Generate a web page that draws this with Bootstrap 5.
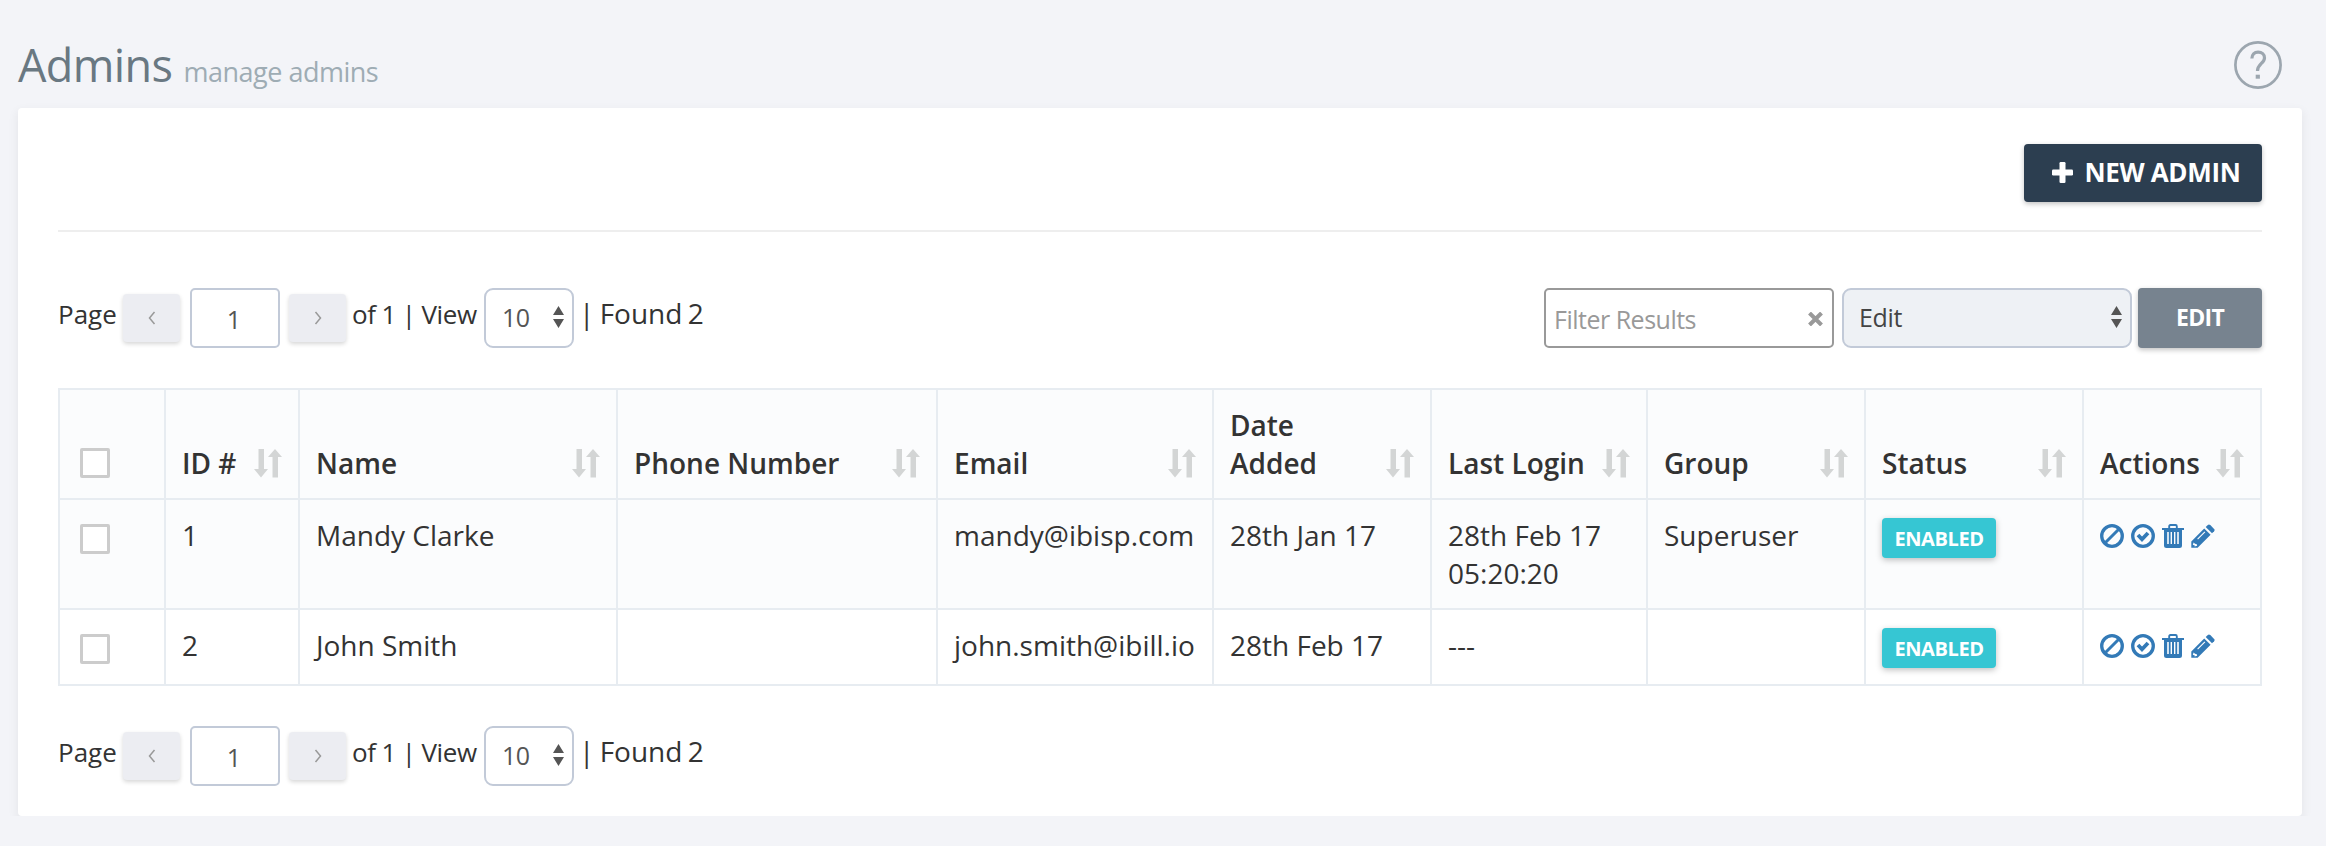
<!DOCTYPE html>
<html lang="en">
<head>
<meta charset="utf-8">
<title>Admins</title>
<link rel="stylesheet" href="https://cdn.jsdelivr.net/npm/bootstrap@5.3.0/dist/css/bootstrap.min.css">
<style>
body{background:#f3f4f8;font-family:"Open Sans",sans-serif;font-size:28px;line-height:38px;color:#333}
.page-head{height:108px;padding:0 44px 0 18px}
.page-title{font-size:45px;line-height:60px;color:#697882;padding-top:35px;font-weight:400;letter-spacing:-.6px}
.page-title small{font-size:27px;color:#9eacb4;font-weight:400;letter-spacing:-.5px}
.help{width:48px;height:48px;margin-top:41px}
.panel{margin:0 24px 0 18px;height:708px;padding:36px 40px 0;border-radius:4px;background:#fff;box-shadow:0 4px 10px 2px rgba(1,1,1,.05)}
.panel .btn{border:0;border-radius:4px;font-weight:700;box-shadow:0 2px 5px rgba(0,0,0,.24);padding:0;color:#fff;line-height:38px}
.panel .btn-new{width:238px;height:58px;background:#2c3e50;font-size:26px;letter-spacing:-.35px;padding-bottom:2px}
.panel .btn-new svg{margin:0 12px 0 6px}
.panel .btn-edit{width:124px;height:60px;background:#77838f;font-size:23px;letter-spacing:-.7px;margin-left:6px;padding-bottom:2px}
.rule{height:2px;background:#eee;margin-top:28px}
.tools{margin-top:56px;height:60px}
.pager{height:60px;font-size:26px}
.pager span{margin-top:7px;height:38px;white-space:nowrap}
.pager .lbl-page{width:65px}
.pager .lbl-of{margin-left:6px;width:132px;letter-spacing:-.4px;word-spacing:-.5px}
.pager .lbl-found{font-size:28px;margin-left:5px;margin-top:6px;word-spacing:-2px}
.panel .pg{width:57px;height:48px;margin-top:6px;background:#ecedf2;box-shadow:0 2px 4px rgba(0,0,0,.16)}
.box{border:2px solid #c2cad8;border-radius:5px;background:#fff;color:#555;height:60px;font-size:25px}
.pg-in{width:90px;margin:0 9px 0 10px;padding:2px 2px 0 0}
.sel{border-radius:9px}
.sel-n{width:90px;padding:0 8px 2px 16px;letter-spacing:-.5px}
.filter{width:290px;border-color:#999;color:#999;padding:2px 9px 0 8px;letter-spacing:-.5px}
.sel-edit{width:290px;background:#eef1f5;color:#444;margin-left:8px;padding:0 8px 2px 15px;letter-spacing:-.3px}
.grid{table-layout:fixed;width:2204px;margin:40px 0 0;border-collapse:collapse;color:#333}
.grid th,.grid td{border:2px solid #e7ecf1;padding:16px 14px 16px 16px;font-weight:400;vertical-align:top;background:#fff}
.grid th{font-weight:600;vertical-align:bottom;padding-right:16px}
.grid th,.grid .odd td{background:#fbfcfd}
.grid tbody tr{height:76px}
.cb{width:30px;height:30px;border:3px solid #ccc;border-radius:2px;background:#fff;margin:8px 0 0 4px}
th .cb{margin:0 0 4px 4px}
.tag{width:114px;height:40px;line-height:41px;background:#36c6d3;color:#fff;border-radius:4px;font-size:20px;font-weight:700;letter-spacing:-.4px;text-align:center;box-shadow:0 2px 6px rgba(0,0,0,.25);margin:2px 0 0}
.acts{color:#337ab7;padding:8px 0 0;gap:7px}
.foot{margin-top:40px}
</style>
<script src="https://cdn.jsdelivr.net/npm/bootstrap@5.3.0/dist/js/bootstrap.bundle.min.js"></script>
</head>
<body>
<svg width="0" height="0" class="d-none">
<symbol id="sort" viewBox="0 0 28 30"><path d="M4.500 1h5.500v20h4l-7 8.500L0 21h4.500zM18.500 29.500V9H14l7-8 7 8h-4v20.500z"/></symbol>
<symbol id="left" viewBox="0 0 8 14"><path d="M6.500 1L1.500 7l5 6" fill="none" stroke="#999" stroke-width="1.500"/></symbol>
<symbol id="right" viewBox="0 0 8 14"><path d="M1.500 1l5 6-5 6" fill="none" stroke="#999" stroke-width="1.500"/></symbol>
<symbol id="updown" viewBox="0 0 11 22"><path d="M5.500 0L11 9H0zM0 13h11l-5.500 9z"/></symbol>
<symbol id="ban" viewBox="0 0 24 24"><circle cx="12" cy="12" r="10.300" fill="none" stroke="currentColor" stroke-width="3.300"/><path d="M5 19L19 5" stroke="currentColor" stroke-width="3"/></symbol>
<symbol id="ok" viewBox="0 0 24 24"><circle cx="12" cy="12" r="10.300" fill="none" stroke="currentColor" stroke-width="3.300"/><path d="M7 11l4 4.200L17 9" fill="none" stroke="currentColor" stroke-width="3.800"/></symbol>
<symbol id="trash" viewBox="0 0 22 24"><path d="M7.200 4.500V2.200Q7.200 1 8.400 1h5.200q1.200 0 1.200 1.200v2.300" fill="none" stroke="currentColor" stroke-width="1.900"/><path fill-rule="evenodd" d="M0 4h22v2h-2v15.500q0 2.500-2.500 2.500h-13Q2 24 2 21.500V6H0zM5.200 8v12h1.600V8zM8.600 8v12h1.400V8zM12 8v12h1.400V8zM15.200 8v12h1.600V8z"/></symbol>
<symbol id="pencil" viewBox="0 0 24 24"><path fill-rule="evenodd" d="M13.200 4.400l6.400 6.400L6.600 23.800H.3v-6.400zM2.600 18.500l-.8 2.500 1.800.3v1.300l2.600-.8-.4-1.600-1.800-.4zM6.200 14.700l.8.8 7.300-7.300-.8-.8z"/><path d="M14.700 2.900L16.800.9q1.200-1 2.500.2l3.800 3.800q1 1.200 0 2.400l-2.100 2z"/></symbol>
</svg>
<header class="page-head d-flex justify-content-between">
<h1 class="page-title m-0">Admins <small>manage admins</small></h1>
<svg class="help" viewBox="0 0 48 48" fill="none" stroke="#9ca6af"><circle cx="24" cy="24" r="22.600" stroke-width="2.700"/><path d="M17.900 17.500c0-3.800 2.400-6.400 6.200-6.400s6.400 2.200 6.400 5.800c0 5.200-7 6.200-7 13" stroke-width="3.200"/><path d="M21.700 35.700h4.200" stroke-width="4"/></svg>
</header>
<main class="panel">
<div class="d-flex justify-content-end"><button class="btn btn-new d-flex align-items-center justify-content-center"><svg width="21" height="21" viewBox="0 0 21 21" fill="#fff"><rect y="7.500" width="21" height="6" rx="1.200"/><rect x="7.500" width="6" height="21" rx="1.200"/></svg>NEW ADMIN</button></div>
<div class="rule"></div>
<div class="tools d-flex justify-content-between">
<div class="pager d-flex"><span class="lbl-page">Page</span><button class="btn pg d-flex align-items-center justify-content-center"><svg width="8" height="14"><use href="#left"/></svg></button><div class="box pg-in d-flex align-items-center justify-content-center">1</div><button class="btn pg d-flex align-items-center justify-content-center"><svg width="8" height="14"><use href="#right"/></svg></button><span class="lbl-of">of 1 | View</span><div class="box sel sel-n d-flex align-items-center justify-content-between">10<svg width="11" height="22" fill="#555"><use href="#updown"/></svg></div><span class="lbl-found">| Found 2</span></div>
<div class="d-flex"><div class="box filter d-flex align-items-center justify-content-between">Filter Results<svg width="15" height="14" viewBox="0 0 15 14"><path d="M1.500 1l12 12M13.500 1l-12 12" stroke="#999" stroke-width="4"/></svg></div><div class="box sel sel-edit d-flex align-items-center justify-content-between">Edit<svg width="11" height="22" fill="#555"><use href="#updown"/></svg></div><button class="btn btn-edit">EDIT</button></div>
</div>
<table class="grid">
<colgroup><col style="width:106px"><col style="width:134px"><col style="width:318px"><col style="width:320px"><col style="width:276px"><col style="width:218px"><col style="width:216px"><col style="width:218px"><col style="width:218px"><col style="width:178px"></colgroup>
<thead><tr id="heads"><th><div class="cb"></div></th></tr></thead>
<tbody>
<tr class="odd"><td><div class="cb"></div></td><td>1</td><td>Mandy Clarke</td><td></td><td>mandy@ibisp.com</td><td>28th Jan 17</td><td>28th Feb 17 05:20:20</td><td>Superuser</td><td><div class="tag">ENABLED</div></td><td><div class="acts d-flex"><svg width="24" height="24"><use href="#ban"/></svg><svg width="24" height="24"><use href="#ok"/></svg><svg width="22" height="24" fill="currentColor"><use href="#trash"/></svg><svg width="24" height="24" fill="currentColor"><use href="#pencil"/></svg></div></td></tr>
<tr><td><div class="cb"></div></td><td>2</td><td>John Smith</td><td></td><td>john.smith@ibill.io</td><td>28th Feb 17</td><td>---</td><td></td><td><div class="tag">ENABLED</div></td><td><div class="acts d-flex"><svg width="24" height="24"><use href="#ban"/></svg><svg width="24" height="24"><use href="#ok"/></svg><svg width="22" height="24" fill="currentColor"><use href="#trash"/></svg><svg width="24" height="24" fill="currentColor"><use href="#pencil"/></svg></div></td></tr>
</tbody>
</table>
<div class="pager foot d-flex"><span class="lbl-page">Page</span><button class="btn pg d-flex align-items-center justify-content-center"><svg width="8" height="14"><use href="#left"/></svg></button><div class="box pg-in d-flex align-items-center justify-content-center">1</div><button class="btn pg d-flex align-items-center justify-content-center"><svg width="8" height="14"><use href="#right"/></svg></button><span class="lbl-of">of 1 | View</span><div class="box sel sel-n d-flex align-items-center justify-content-between">10<svg width="11" height="22" fill="#555"><use href="#updown"/></svg></div><span class="lbl-found">| Found 2</span></div>
</main>
<script>
document.getElementById('heads').insertAdjacentHTML('beforeend',['ID #','Name','Phone Number','Email','Date<br>Added','Last Login','Group','Status','Actions'].map(t=>'<th><div class="d-flex justify-content-between align-items-end"><div>'+t+'</div><svg class="mb-1" width="28" height="30" fill="#d3d5d5"><use href="#sort"/></svg></div></th>').join(''));
</script>
</body>
</html>
